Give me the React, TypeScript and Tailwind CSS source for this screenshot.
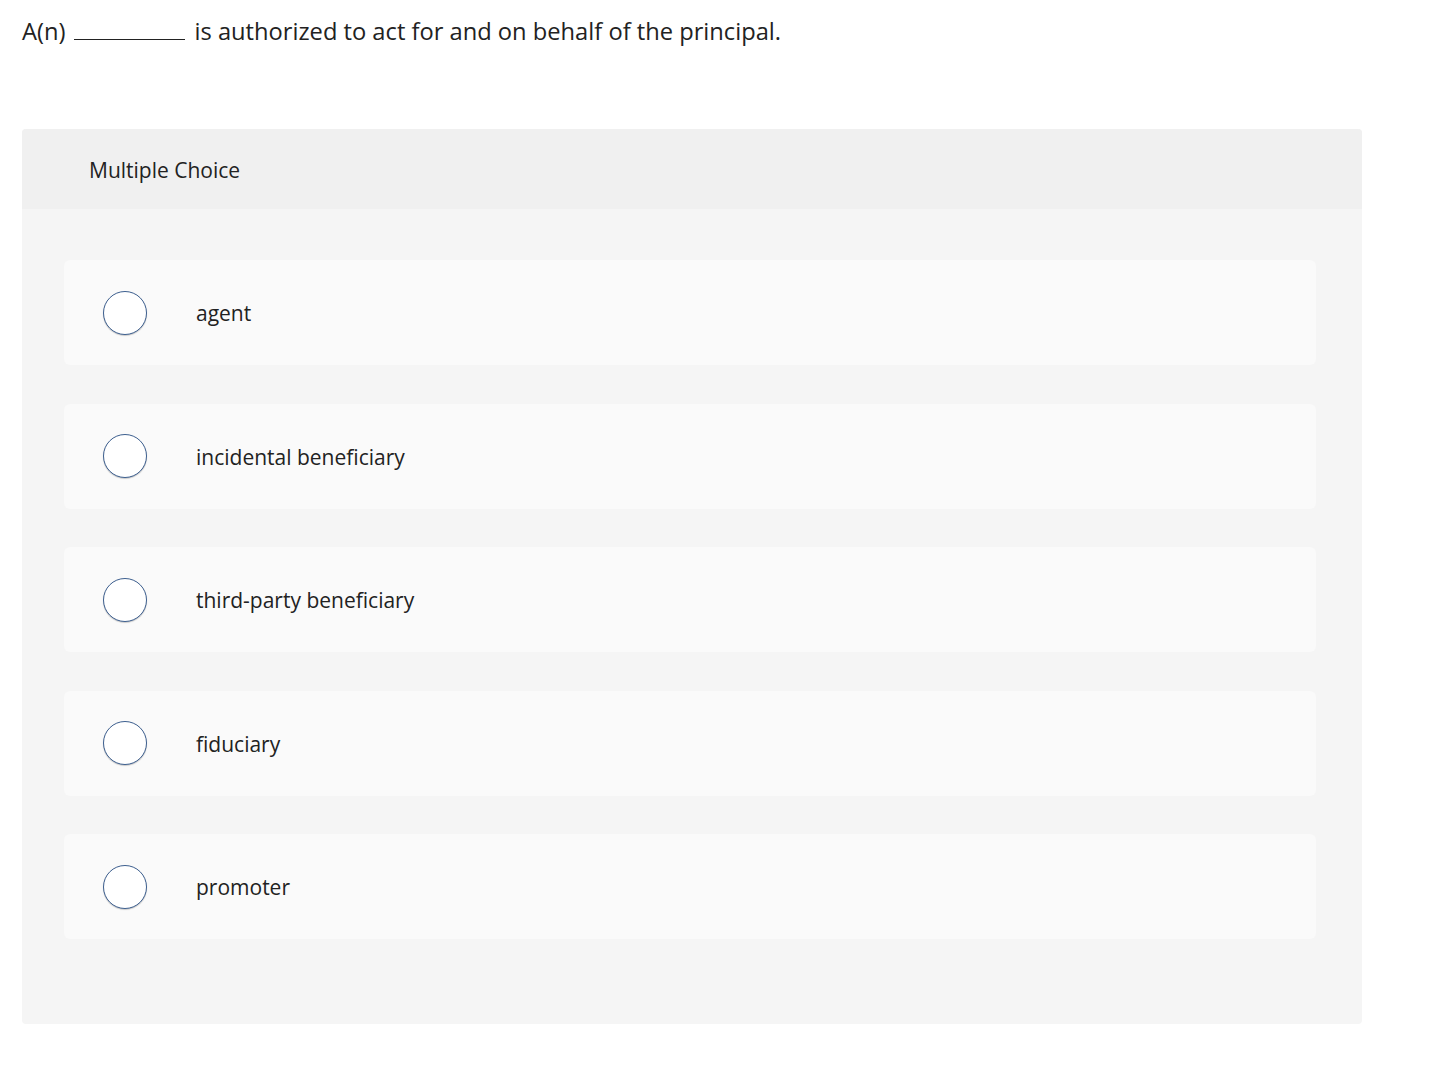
const options = ["agent", "incidental beneficiary", "third-party beneficiary", "fiduciary", "promoter"];

export default function App() {
  return (
    <div className="min-h-screen bg-white text-[#222] font-['Open_Sans','Liberation_Sans',sans-serif]">
      <div className="pt-[15px] pl-[22px] flex items-end text-[23.7px] leading-[32px]">
        <span>A(n)</span>
        <span className="inline-block w-[111px] h-[1.5px] bg-[#222] ml-[9px] mr-[9px] mb-[7px]"></span>
        <span>is authorized to act for and on behalf of the principal.</span>
      </div>

      <section className="ml-[22px] mt-[82px] w-[1340px] rounded-[4px] bg-[#f5f5f5] overflow-hidden">
        <div className="h-[80px] bg-[#f0f0f0] flex items-center pl-[67px] pt-[3px] text-[21px]">Multiple Choice</div>
        <div className="pt-[51px] pb-[85px] pl-[42px] pr-[46px] flex flex-col gap-[38.5px]">
          {options.map((o) => (
            <div key={o} className="h-[105px] rounded-[6px] bg-[#fafafa] flex items-center">
              <span className="ml-[39px] w-[44px] h-[44px] rounded-full border-[1.5px] border-[#3d5f8f] bg-white shadow-[0_1px_1px_rgba(0,0,0,0.2)]"></span>
              <span className="ml-[49px] mt-[3px] text-[21px]">{o}</span>
            </div>
          ))}
        </div>
      </section>
    </div>
  );
}
